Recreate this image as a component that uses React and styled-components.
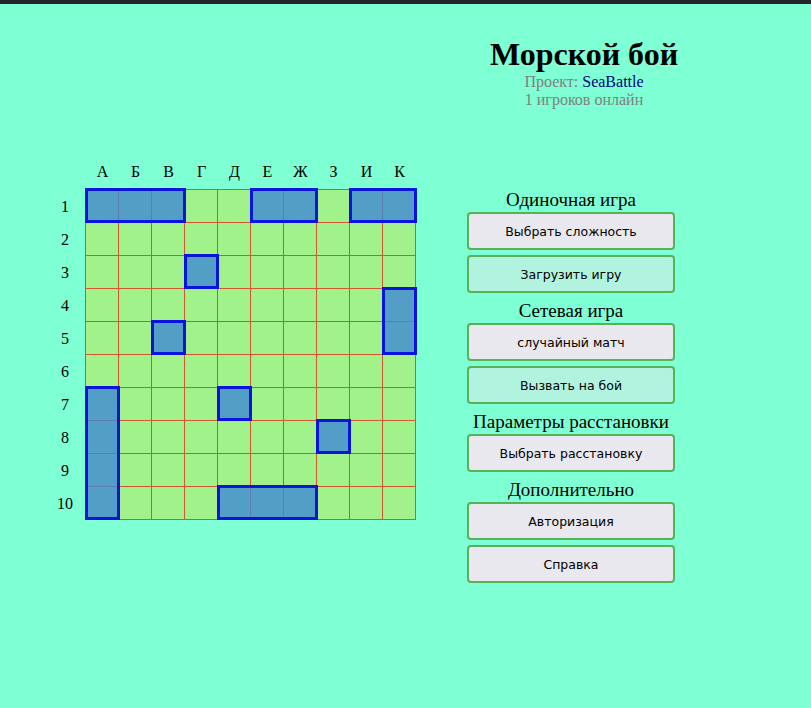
import styled, { createGlobalStyle } from "styled-components";

const GlobalStyle = createGlobalStyle`
  html, body {
    margin: 0;
    padding: 0;
    background: #7fffd4;
  }
  body {
    font-family: "Liberation Serif", "Times New Roman", serif;
    font-size: 16px;
    color: #000;
    min-height: 708px;
  }
`;

const letters = ["А", "Б", "В", "Г", "Д", "Е", "Ж", "З", "И", "К"];

// col, row (1-based), length, vertical?
const ships = [
  { col: 1, row: 1, len: 3 },
  { col: 6, row: 1, len: 2 },
  { col: 9, row: 1, len: 2 },
  { col: 4, row: 3, len: 1 },
  { col: 10, row: 4, len: 2, vertical: true },
  { col: 3, row: 5, len: 1 },
  { col: 1, row: 7, len: 4, vertical: true },
  { col: 5, row: 7, len: 1 },
  { col: 8, row: 8, len: 1 },
  { col: 5, row: 10, len: 3 },
];

const menu = [
  { title: "Одиночная игра", buttons: [{ text: "Выбрать сложность" }, { text: "Загрузить игру", alt: true }] },
  { title: "Сетевая игра", buttons: [{ text: "случайный матч" }, { text: "Вызвать на бой", alt: true }] },
  { title: "Параметры расстановки", buttons: [{ text: "Выбрать расстановку" }] },
  { title: "Дополнительно", buttons: [{ text: "Авторизация" }, { text: "Справка" }] },
];

const App = () => {
  return (
    <Page>
      <GlobalStyle />
      <TopBar />
      <Header>
        <Title>Морской бой</Title>
        <Sub>
          Проект: <ProjectLink href="#">SeaBattle</ProjectLink>
        </Sub>
        <Sub>1 игроков онлайн</Sub>
      </Header>
      <Main>
        <Board>
          <Corner />
          <ColLabels>
            {letters.map((l) => (
              <ColLabel key={l}>{l}</ColLabel>
            ))}
          </ColLabels>
          <RowLabels>
            {Array.from({ length: 10 }, (_, i) => (
              <RowLabel key={i}>{i + 1}</RowLabel>
            ))}
          </RowLabels>
          <Field>
            <Cells>
              {Array.from({ length: 100 }, (_, i) => (
                <Cell key={i} />
              ))}
            </Cells>
            <ShipLayer>
              {ships.map((s, i) => (
                <Ship
                  key={i}
                  style={{
                    gridColumn: `${s.col} / span ${s.vertical ? 1 : s.len}`,
                    gridRow: `${s.row} / span ${s.vertical ? s.len : 1}`,
                  }}
                />
              ))}
            </ShipLayer>
          </Field>
        </Board>
        <Menu>
          {menu.map((section) => (
            <Section key={section.title}>
              <SectionTitle>{section.title}</SectionTitle>
              <Buttons>
                {section.buttons.map((b) => (
                  <MenuButton key={b.text} $alt={b.alt}>
                    {b.text}
                  </MenuButton>
                ))}
              </Buttons>
            </Section>
          ))}
        </Menu>
      </Main>
    </Page>
  );
};

const Page = styled.div`
  min-height: 708px;
`;

const TopBar = styled.div`
  height: 4px;
  background: #232427;
`;

const Header = styled.header`
  padding: 32px 0 0 357px;
  text-align: center;
`;

const Title = styled.h1`
  margin: 0;
  font-size: 32px;
  font-weight: bold;
`;

const Sub = styled.div`
  color: #808080;
  font-size: 16px;
`;

const ProjectLink = styled.a`
  color: #000080;
  text-decoration: none;
`;

const Main = styled.main`
  display: flex;
  align-items: flex-start;
  margin-top: 47px;
  padding-left: 52px;
  gap: 51px;
`;

const Board = styled.div`
  display: grid;
  grid-template-columns: 33px 331px;
  grid-template-rows: 33px 331px;
`;

const Corner = styled.div``;

const ColLabels = styled.div`
  display: grid;
  grid-template-columns: repeat(10, 33px);
  padding-left: 1px;
`;

const ColLabel = styled.div`
  text-align: center;
  line-height: 32px;
  font-size: 16px;
`;

const RowLabels = styled.div`
  display: grid;
  grid-template-rows: repeat(10, 33px);
  padding-top: 1px;
  padding-right: 7px;
`;

const RowLabel = styled.div`
  text-align: center;
  line-height: 33px;
  font-size: 16px;
`;

const Field = styled.div`
  display: grid;

  & > * {
    grid-area: 1 / 1;
  }
`;

const Cells = styled.div`
  display: grid;
  grid-template-columns: repeat(10, 33px);
  grid-template-rows: repeat(10, 33px);
  border-left: 1px solid #d4572e;
  border-top: 1px solid #d4572e;
  background: #a2f28b;
`;

const Cell = styled.div`
  border-right: 1px solid #d4572e;
  border-bottom: 1px solid #d4572e;
`;

const ShipLayer = styled.div`
  display: grid;
  grid-template-columns: repeat(10, 33px);
  grid-template-rows: repeat(10, 33px);
  padding: 1px 0 0 1px;
`;

const Ship = styled.div`
  margin: -2px -1px 0 -1px;
  border: 3px solid #0a14dc;
  background: rgba(62, 136, 212, 0.8);
`;

const Menu = styled.div`
  width: 208px;
  margin-top: 35px;
  display: flex;
  flex-direction: column;
  gap: 9px;
`;

const Section = styled.section`
  display: flex;
  flex-direction: column;
  gap: 4px;
`;

const SectionTitle = styled.div`
  text-align: center;
  font-size: 19px;
  line-height: 17px;
  white-space: nowrap;
`;

const Buttons = styled.div`
  display: flex;
  flex-direction: column;
  gap: 5px;
`;

const MenuButton = styled.button`
  height: 38px;
  width: 100%;
  border: 2px solid #56b159;
  border-radius: 4px;
  background: ${(p) => (p.$alt ? "#b2f3df" : "#e8e8ee")};
  color: #000;
  font-family: "DejaVu Sans", Verdana, sans-serif;
  font-size: 12.5px;
  cursor: pointer;
  padding: 0;
`;

export default App;
